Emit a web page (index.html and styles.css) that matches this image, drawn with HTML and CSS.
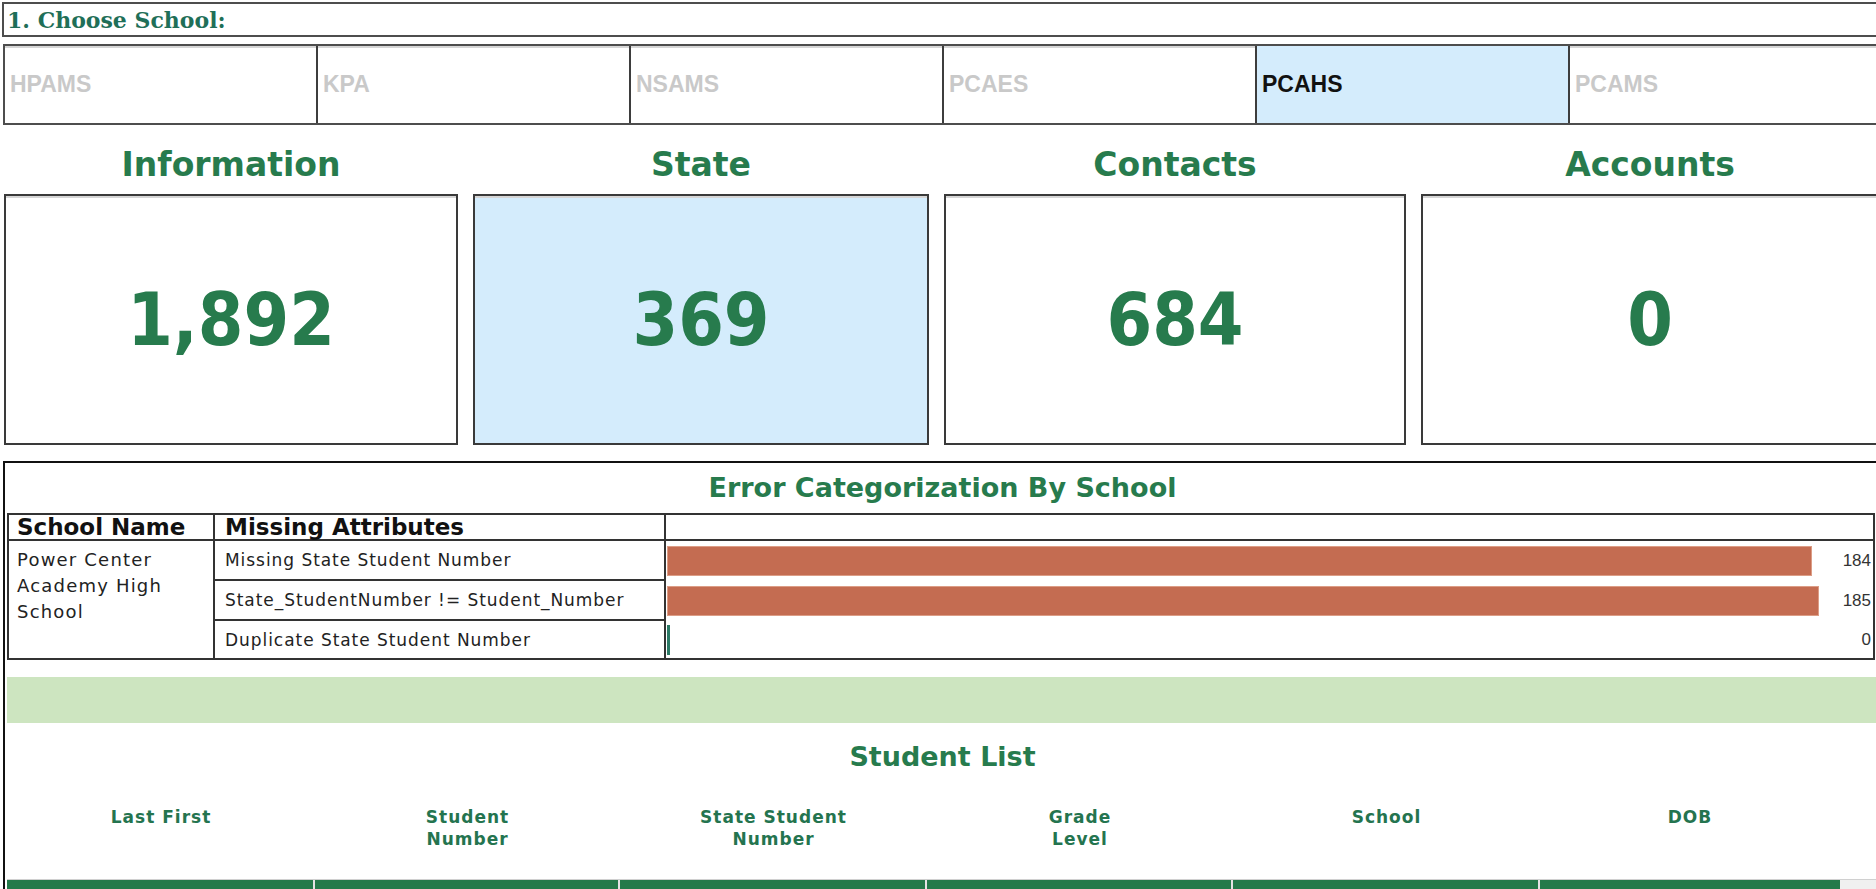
FILE: index.html
```html
<!DOCTYPE html>
<html lang="en">
<head>
<meta charset="utf-8">
<title>School Data Dashboard</title>
<link rel="stylesheet" href="styles.css">
</head>
<body>
<div class="page">
  <div class="title-bar">1. Choose School:</div>

  <div class="tabs">
    <div class="tab">HPAMS</div>
    <div class="tab">KPA</div>
    <div class="tab">NSAMS</div>
    <div class="tab">PCAES</div>
    <div class="tab active">PCAHS</div>
    <div class="tab">PCAMS</div>
  </div>

  <div class="kpis">
    <div class="kpi">
      <div class="kpi-title">Information</div>
      <div class="kpi-card"><span class="kpi-value">1,892</span></div>
    </div>
    <div class="kpi">
      <div class="kpi-title">State</div>
      <div class="kpi-card selected"><span class="kpi-value">369</span></div>
    </div>
    <div class="kpi">
      <div class="kpi-title">Contacts</div>
      <div class="kpi-card"><span class="kpi-value">684</span></div>
    </div>
    <div class="kpi">
      <div class="kpi-title">Accounts</div>
      <div class="kpi-card"><span class="kpi-value">0</span></div>
    </div>
  </div>

  <div class="panel">
    <div class="section-title">Error Categorization By School</div>

    <div class="err">
      <div class="err-h c1">School Name</div>
      <div class="err-h c2">Missing Attributes</div>
      <div class="err-h c3"></div>

      <div class="school-cell">Power Center Academy High School</div>

      <div class="attr-cell first">Missing State Student Number</div>
      <div class="bar-cell">
        <div class="bar" style="width:1145px"></div>
        <span class="bar-val">184</span>
      </div>

      <div class="attr-cell second">State_StudentNumber != Student_Number</div>
      <div class="bar-cell">
        <div class="bar" style="width:1152px"></div>
        <span class="bar-val">185</span>
      </div>

      <div class="attr-cell">Duplicate State Student Number</div>
      <div class="bar-cell">
        <div class="bar zero"></div>
        <span class="bar-val">0</span>
      </div>
    </div>

    <div class="band"></div>

    <div class="section-title list-title">Student List</div>

    <div class="list-head">
      <div class="lh w1">Last First</div>
      <div class="lh w2">Student<br>Number</div>
      <div class="lh w3">State Student<br>Number</div>
      <div class="lh w4">Grade<br>Level</div>
      <div class="lh w5">School</div>
      <div class="lh w6">DOB</div>
    </div>

    <div class="list-row">
      <div class="lr w1"></div>
      <div class="lr w2"></div>
      <div class="lr w3"></div>
      <div class="lr w4"></div>
      <div class="lr w5"></div>
      <div class="lr w6"></div>
      <div class="lr-track"></div>
    </div>
  </div>
</div>
</body>
</html>
```

FILE: styles.css
```css
* {
  box-sizing: border-box;
}

html,
body {
  margin: 0;
  padding: 0;
}

body {
  background: #ffffff;
  overflow: hidden;
  font-family: "DejaVu Sans", Verdana, sans-serif;
  color: #222;
}

.page {
  width: 1886px;
  padding: 2px 0 0 2px;
}

/* ---------- title bar ---------- */
.title-bar {
  height: 35px;
  border: 2px solid #4d4d4d;
  border-right: none;
  padding-left: 3px;
  display: flex;
  align-items: center;
  font-family: "DejaVu Serif", serif;
  font-weight: bold;
  font-size: 22px;
  color: #1f6f58;
}

/* ---------- school tabs ---------- */
.tabs {
  margin-top: 7px;
  margin-left: 1px;
  height: 81px;
  display: flex;
  border: 2px solid #4d4d4d;
  border-right: none;
  box-shadow: inset 0 2px 0 #d6d6d6;
}

.tab {
  flex: none;
  width: 313px;
  border-right: 2px solid #3d3d3d;
  display: flex;
  align-items: center;
  padding-left: 5px;
  font-family: "Liberation Sans", Arial, sans-serif;
  font-weight: bold;
  font-size: 23px;
  color: #c9c9c9;
}

.tab.active {
  background: #d4ecfc;
  color: #111;
}

/* ---------- KPI cards ---------- */
.kpis {
  display: grid;
  grid-template-columns: 454px 456px 462px 458px;
  column-gap: 15px;
  margin-left: 2px;
}

.kpi-title {
  margin-top: 20px;
  height: 40px;
  line-height: 40px;
  text-align: center;
  font-weight: bold;
  font-size: 33px;
  color: #277b4d;
}

.kpi-card {
  margin-top: 9px;
  height: 251px;
  border: 2px solid #3a3a3a;
  box-shadow: inset 0 2px 0 #d6d6d6;
  background: #ffffff;
  display: flex;
  align-items: center;
  justify-content: center;
}

.kpi-card.selected {
  background: #d4ecfc;
}

.kpi-value {
  font-family: "DejaVu Sans Condensed", "DejaVu Sans", sans-serif;
  font-stretch: condensed;
  font-weight: bold;
  font-size: 73px;
  color: #277b4d;
  line-height: 1;
}

/* ---------- panel ---------- */
.panel {
  margin-top: 16px;
  margin-left: 1px;
  width: 1884px;
  height: 460px;
  border-top: 2px solid #111;
  border-left: 2px solid #111;
}

.section-title {
  margin-top: 9px;
  width: 1875px;
  height: 32px;
  line-height: 32px;
  text-align: center;
  font-weight: bold;
  font-size: 27px;
  color: #277b4d;
}

/* ---------- error table ---------- */
.err {
  margin-top: 9px;
  margin-left: 2px;
  width: 1868px;
  display: grid;
  grid-template-columns: 206px 451px 1fr;
  grid-template-rows: 26px 40px 40px 37px;
  border: 2px solid #333;
}

.err-h {
  border-bottom: 2px solid #333;
  font-weight: bold;
  font-size: 23px;
  line-height: 24px;
  color: #111;
  white-space: nowrap;
}

.err-h.c1 {
  border-right: 2px solid #333;
  padding-left: 8px;
}

.err-h.c2 {
  border-right: 2px solid #333;
  padding-left: 10px;
}

.school-cell {
  grid-row: 2 / span 3;
  grid-column: 1;
  border-right: 2px solid #333;
  padding: 6px 6px 0 8px;
  font-size: 18px;
  line-height: 26px;
  letter-spacing: 1.2px;
  color: #222;
}

.attr-cell {
  grid-column: 2;
  border-right: 2px solid #333;
  display: flex;
  align-items: center;
  padding-left: 10px;
  font-size: 17px;
  letter-spacing: 0.95px;
  white-space: nowrap;
  color: #222;
}

.attr-cell.first,
.attr-cell.second {
  border-bottom: 2px solid #333;
}

.bar-cell {
  grid-column: 3;
  display: flex;
  align-items: center;
  justify-content: space-between;
  padding: 0 2px 0 1px;
}

.bar {
  height: 30px;
  background: #c46c51;
  border: 1px solid #dc9d86;
}

.bar.zero {
  width: 3px;
  border: none;
  background: #2c7a66;
}

.bar-val {
  font-family: "Liberation Sans", Arial, sans-serif;
  font-size: 17px;
  color: #333;
}

/* ---------- band ---------- */
.band {
  margin-top: 17px;
  margin-left: 2px;
  height: 46px;
  background: #cde5c0;
}

.list-title {
  margin-top: 18px;
}

/* ---------- student list ---------- */
.list-head {
  margin-top: 33px;
  margin-left: 2px;
  height: 73px;
  display: flex;
}

.lh {
  flex: none;
  text-align: center;
  font-weight: bold;
  font-size: 17px;
  line-height: 22px;
  letter-spacing: 1px;
  color: #24744f;
}

.w1 { width: 308px; }
.w2 { width: 305px; }
.w3 { width: 307px; }
.w4 { width: 306px; }
.w5 { width: 307px; }
.w6 { width: 300px; }

.list-row {
  margin-left: 2px;
  height: 40px;
  display: flex;
  border-top: 1px solid #d0d0d0;
}

.lr {
  flex: none;
  background: #247a4a;
  border-right: 2px solid #e4e4e4;
}

.lr.w6 {
  border-right: none;
}

.lr-track {
  flex: 1;
  background: #f0f0f0;
}
```
